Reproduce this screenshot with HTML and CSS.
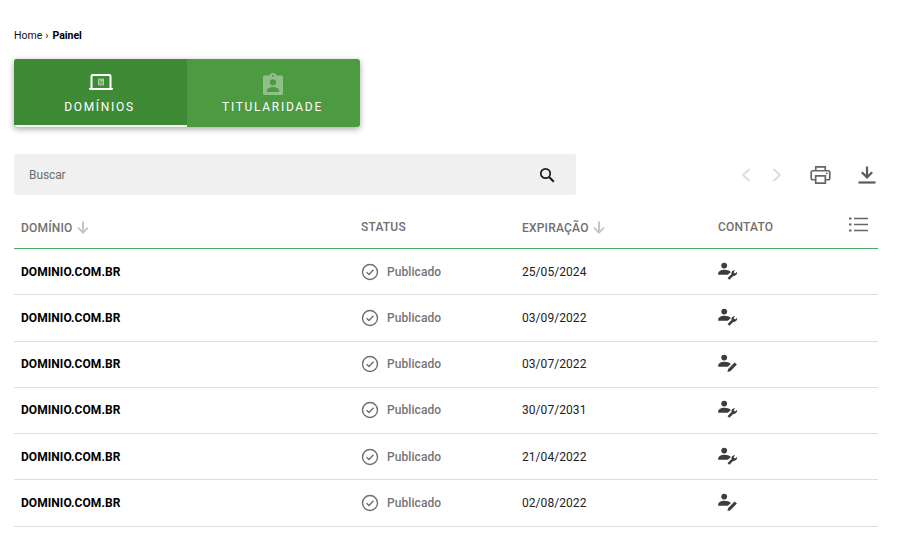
FILE: index.html
```html
<!DOCTYPE html>
<html lang="pt-BR">
<head>
<meta charset="utf-8">
<title>Painel</title>
<link rel="stylesheet" href="styles.css">
</head>
<body>
<svg class="defs" width="0" height="0" aria-hidden="true">
  <defs>
    <symbol id="check" viewBox="0 0 18 18">
      <circle cx="9" cy="9" r="7.5" fill="none" stroke="#6f6f6f" stroke-width="1.400"/>
      <path d="M5.600 9.200l2.400 2.400 4.500-4.800" fill="none" stroke="#6f6f6f" stroke-width="1.400"/>
    </symbol>
    <symbol id="wrench" viewBox="0 0 20 18">
      <circle cx="6.200" cy="3.600" r="2.900" fill="#3d3d3d"/>
      <path d="M0.200 12.700v-1.300C0.400 9 3.400 7.700 6.200 7.700c2.700 0 5.300.8 6.700 2.300l-3 2.700z" fill="#3d3d3d"/>
      <path d="M9.500 16.300l4-4.200c-.5-2 .9-3.900 3.500-4l-1.300 2.100 1.300 1.300 2.200-1.700c.2 2.700-1.800 4.600-4.100 4.100l-3.600 3.900z" fill="#3d3d3d"/>
    </symbol>
    <symbol id="pencil" viewBox="0 0 20 18">
      <circle cx="6.200" cy="3.600" r="2.900" fill="#3d3d3d"/>
      <path d="M0.200 12.700v-1.300C0.400 9 3.400 7.700 6.200 7.700c2.700 0 5.300.8 6.700 2.300l-3 2.700z" fill="#3d3d3d"/>
      <path d="M9.400 18l.8-3 6.400-6.600 2.300 2.200-6.500 6.600z" fill="#3d3d3d"/>
    </symbol>
    <symbol id="down" viewBox="0 0 12 13">
      <path d="M6 0.500v11M1 6.600l5 5 5-5" fill="none" stroke="#c4c4c4" stroke-width="1.900"/>
    </symbol>
  </defs>
</svg>

<nav class="crumbs"><span>Home</span><span class="crumb-sep">›</span><strong>Painel</strong></nav>

<div class="tabs">
  <div class="tab tab-active">
    <svg class="tab-icon" viewBox="0 0 26 20" width="26" height="20">
      <path d="M3.500 15V3.200c0-.7.5-1.200 1.200-1.200h16.600c.7 0 1.200.5 1.200 1.200V15" fill="none" stroke="#fff" stroke-width="2"/>
      <path d="M1 15h24v.8c0 .7-.5 1.200-1.200 1.200H2.200c-.7 0-1.200-.5-1.200-1.200z" fill="#fff"/>
      <rect x="10" y="5.600" width="6" height="6.800" fill="#a9cfa4"/>
      <path d="M12 6.500v5M14 8v3.500" stroke="#3f8a35" stroke-width="0.900"/>
    </svg>
    <span>DOMÍNIOS</span>
  </div>
  <div class="tab">
    <svg class="tab-icon tab-icon-tall" viewBox="0 0 20 22" width="20" height="22">
      <path fill-rule="evenodd" fill="#8fc088" d="M1.500 2.400h5C6.900 1 8.300 0 10 0s3.100 1 3.500 2.400h5c.8 0 1.500.7 1.500 1.500v16.600c0 .8-.7 1.500-1.500 1.500h-17C.7 22 0 21.300 0 20.500V3.900c0-.8.7-1.500 1.500-1.500zM10 1.700a1 1 0 1 0 0 2 1 1 0 0 0 0-2zM10 6.200a3.100 3.100 0 1 0 0 6.200 3.100 3.100 0 0 0 0-6.200zM3.800 18.900h12.400v-1.500c0-2-4.100-3.300-6.200-3.300s-6.200 1.300-6.200 3.300z"/>
    </svg>
    <span>TITULARIDADE</span>
  </div>
</div>

<div class="toolbar">
  <div class="search">
    <span class="search-label">Buscar</span>
    <svg viewBox="0 0 16 16" width="16" height="16"><circle cx="6.500" cy="6.500" r="4.700" fill="none" stroke="#1b1b1b" stroke-width="1.700"/><path d="M10 10l4.800 4.800" stroke="#1b1b1b" stroke-width="2"/></svg>
  </div>
  <div class="actions">
    <svg class="nav-icon" viewBox="0 0 10 14" width="10" height="14"><path d="M8.500 1L2 7l6.500 6" fill="none" stroke="#dcdcdc" stroke-width="1.800"/></svg>
    <svg class="nav-icon nav-next" viewBox="0 0 10 14" width="10" height="14"><path d="M1.500 1L8 7l-6.500 6" fill="none" stroke="#dcdcdc" stroke-width="1.800"/></svg>
    <svg class="print-icon" viewBox="0 0 22 19" width="21" height="18"><path d="M6 5V1h10v4M5.500 14.500H3c-1 0-1.800-.8-1.800-1.800V6.800C1.200 5.800 2 5 3 5h16c1 0 1.800.8 1.800 1.800v5.900c0 1-.8 1.800-1.800 1.800h-2.500" fill="none" stroke="#666" stroke-width="1.800"/><path d="M5.900 10.500h10.200v7.500H5.900z" fill="none" stroke="#666" stroke-width="1.800"/><circle cx="17.600" cy="7.800" r="1" fill="#666"/></svg>
    <svg class="dl-icon" viewBox="0 0 18 18" width="18" height="18"><path d="M9 0.500v10M3.800 6.200L9 11.400l5.200-5.200" fill="none" stroke="#5c5c5c" stroke-width="2.200"/><path d="M0.500 16.500h17" stroke="#5c5c5c" stroke-width="2.200"/></svg>
  </div>
</div>

<div class="table">
  <div class="row head">
    <div class="th th-low">DOMÍNIO <svg class="sort" width="12" height="13"><use href="#down"/></svg></div>
    <div class="th">STATUS</div>
    <div class="th th-low">EXPIRAÇÃO <svg class="sort" width="12" height="13"><use href="#down"/></svg></div>
    <div class="th">CONTATO</div>
    <svg class="list-icon" viewBox="0 0 19 15" width="19" height="15"><path d="M5 1.500h14M5 7.500h14M5 13.500h14" stroke="#666" stroke-width="1.500"/><path d="M0 1.500h2.500M0 7.500h2.500M0 13.500h2.500" stroke="#666" stroke-width="2.200"/></svg>
  </div>
  <div class="row">
    <div class="domain">DOMINIO.COM.BR</div>
    <div class="status"><svg width="18" height="18"><use href="#check"/></svg>Publicado</div>
    <div class="date">25/05/2024</div>
    <svg class="contact" width="20" height="18"><use href="#wrench"/></svg>
  </div>
  <div class="row">
    <div class="domain">DOMINIO.COM.BR</div>
    <div class="status"><svg width="18" height="18"><use href="#check"/></svg>Publicado</div>
    <div class="date">03/09/2022</div>
    <svg class="contact" width="20" height="18"><use href="#wrench"/></svg>
  </div>
  <div class="row">
    <div class="domain">DOMINIO.COM.BR</div>
    <div class="status"><svg width="18" height="18"><use href="#check"/></svg>Publicado</div>
    <div class="date">03/07/2022</div>
    <svg class="contact" width="20" height="18"><use href="#pencil"/></svg>
  </div>
  <div class="row">
    <div class="domain">DOMINIO.COM.BR</div>
    <div class="status"><svg width="18" height="18"><use href="#check"/></svg>Publicado</div>
    <div class="date">30/07/2031</div>
    <svg class="contact" width="20" height="18"><use href="#wrench"/></svg>
  </div>
  <div class="row">
    <div class="domain">DOMINIO.COM.BR</div>
    <div class="status"><svg width="18" height="18"><use href="#check"/></svg>Publicado</div>
    <div class="date">21/04/2022</div>
    <svg class="contact" width="20" height="18"><use href="#wrench"/></svg>
  </div>
  <div class="row">
    <div class="domain">DOMINIO.COM.BR</div>
    <div class="status"><svg width="18" height="18"><use href="#check"/></svg>Publicado</div>
    <div class="date">02/08/2022</div>
    <svg class="contact" width="20" height="18"><use href="#pencil"/></svg>
  </div>
</div>
</body>
</html>
```

FILE: styles.css
```css
* { box-sizing: border-box; }

html, body { height: 100%; }

body {
  margin: 0;
  padding: 29px 22px 0 14px;
  background: #fff;
  color: #000;
  font-family: Roboto, "Liberation Sans", sans-serif;
  overflow: hidden;
}

.defs { display: block; height: 0; }

.crumbs {
  display: flex;
  align-items: center;
  gap: 3px;
  height: 14px;
  font-size: 10.5px;
  line-height: 14px;
  color: #111;
}

.crumbs strong { font-weight: 700; color: #000; margin-left: 1px; }

.tabs {
  display: flex;
  width: 346px;
  height: 68px;
  margin-top: 16px;
  border-radius: 3px;
  background: #4c9b40;
  box-shadow: 0 2px 6px rgba(0, 0, 0, .35);
  overflow: hidden;
}

.tab {
  display: flex;
  flex: 1;
  flex-direction: column;
  align-items: center;
  height: 68px;
  padding-top: 14px;
  color: #fff;
  font-size: 12px;
  line-height: 14px;
  letter-spacing: 1.7px;
}

.tab span { margin-top: 7px; margin-right: 2px; }

.tab-icon { display: block; }

.tab-icon-tall { margin-right: 2px; }

.tab-icon-tall + span { margin-top: 5px; }

.tab-active {
  background: #3f8a35;
  border-bottom: 2px solid #f2f2f2;
}

.toolbar {
  display: flex;
  align-items: center;
  justify-content: space-between;
  height: 41px;
  margin-top: 27px;
}

.search {
  display: flex;
  align-items: center;
  justify-content: space-between;
  width: 562px;
  height: 41px;
  padding: 0 21px 0 15px;
  border-radius: 3px;
  background: #f0f0f0;
}

.search-label {
  font-size: 12px;
  letter-spacing: -.1px;
  color: #6e6e6e;
}

.actions {
  display: flex;
  align-items: center;
  padding-right: 2px;
}

.nav-next { margin-left: 21px; }

.print-icon { margin-left: 28px; }

.dl-icon { margin-left: 27px; }

.table { margin-top: 10px; }

.row {
  display: grid;
  grid-template-columns: 340px 161px 196px 1fr;
  align-items: center;
  height: 46.25px;
  padding-left: 7px;
  border-bottom: 1px solid #dedede;
}

.head {
  position: relative;
  height: 44px;
  border-bottom: 1px solid #4fa85f;
}

.th {
  font-size: 12px;
  font-weight: 500;
  color: #707070;
  letter-spacing: .2px;
}

.th-low { padding-top: 2px; }

.sort {
  margin-left: 1px;
  vertical-align: -2px;
}

.list-icon {
  position: absolute;
  top: 12px;
  right: 10px;
}

.domain {
  font-size: 12px;
  font-weight: 700;
  letter-spacing: .06px;
  color: #000;
}

.status {
  display: flex;
  align-items: center;
  gap: 8px;
  font-size: 12px;
  font-weight: 500;
  letter-spacing: .08px;
  color: #757575;
}

.status svg { flex: none; }

.date {
  font-size: 12px;
  letter-spacing: .06px;
  color: #222;
}

.contact { display: block; margin-top: -2px; }
```
